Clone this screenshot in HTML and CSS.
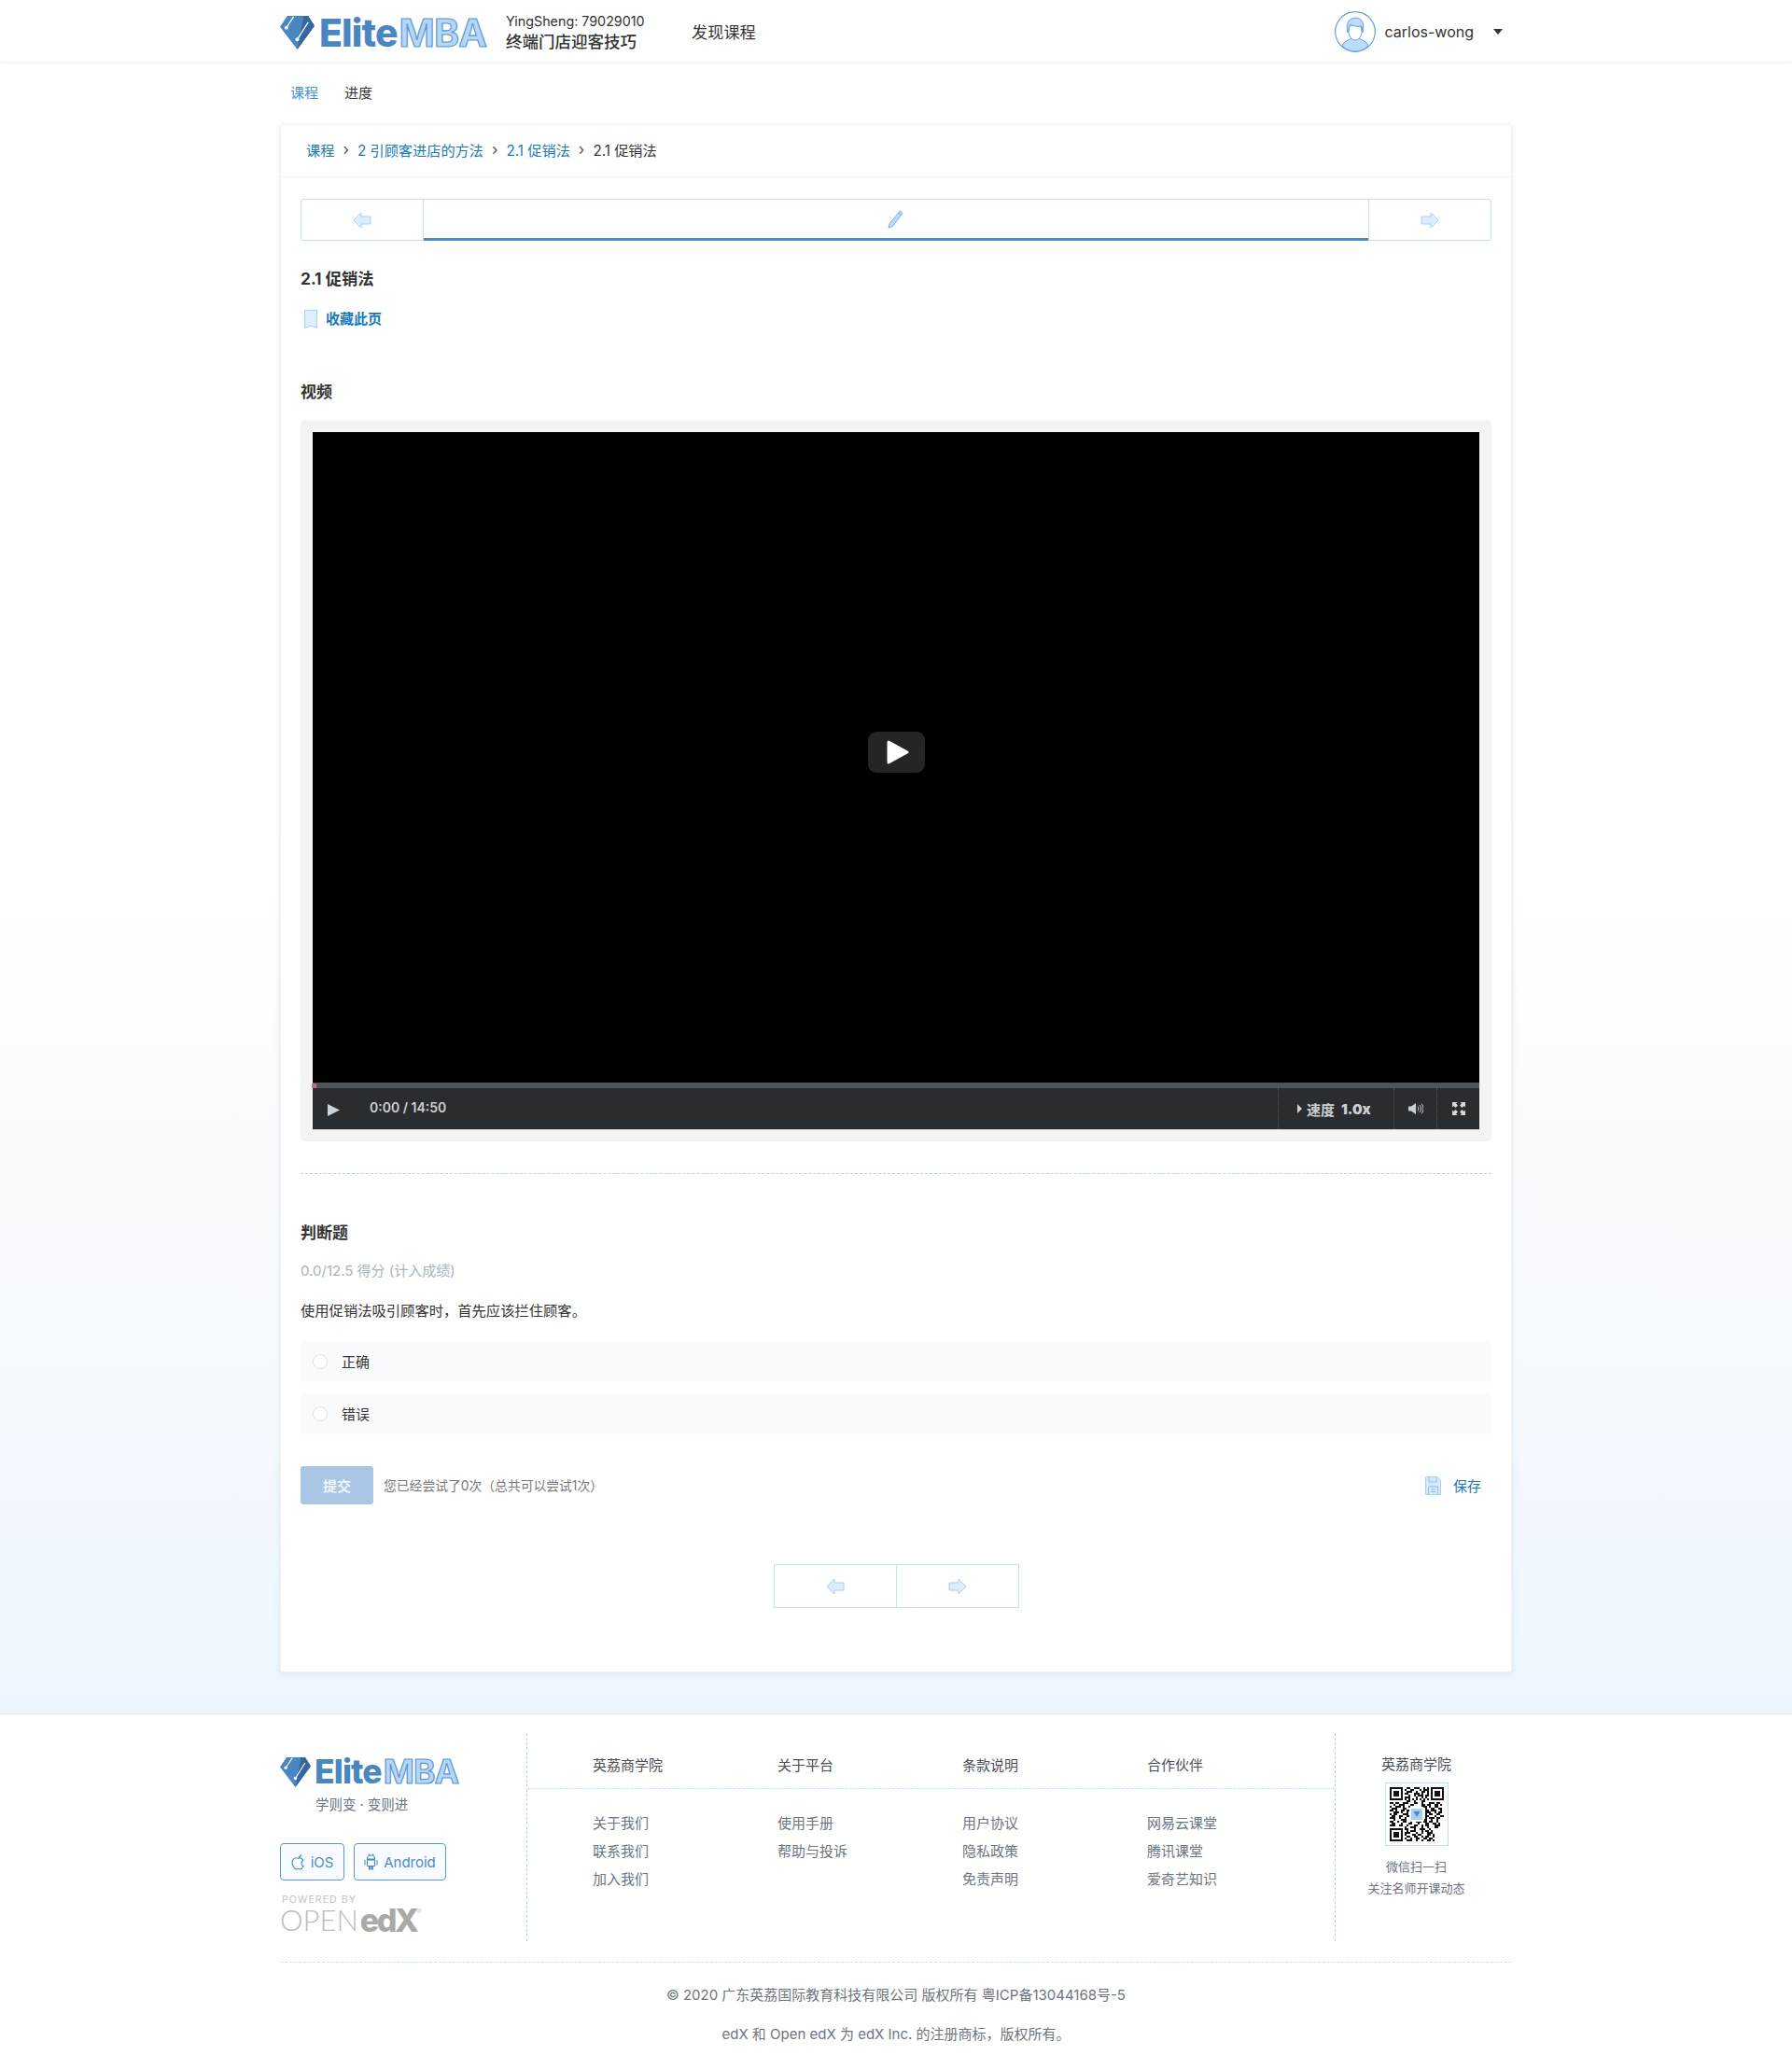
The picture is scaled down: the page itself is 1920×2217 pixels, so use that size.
FILE: index.html
```html
<!DOCTYPE html>
<html lang="zh-CN">
<head>
    <meta charset="UTF-8">
    <title>2.1 促销法</title>
    <link rel="stylesheet" href="styles.css">
</head>
<body>
    <header class="site-header">
        <div class="wrap header-inner">
            <a class="logo">
                <svg class="logo-mark" viewBox="0 0 38 37"><path d="M8 0H31L38 11L19 37L0 12Z" fill="#4a86c2"/><path d="M26 0H31L38 11L19 37Z" fill="#35689c"/><path d="M7 13L15 1M19 26L31 7" stroke="#fff" stroke-width="1.3" fill="none"/><circle cx="7" cy="13" r="2" fill="#fff"/><circle cx="19" cy="26" r="2" fill="#fff"/></svg>
                <span class="logo-elite">Elite</span><span class="logo-mba">MBA</span>
            </a>
            <div class="course-info">
                <div class="course-org">YingSheng: 79029010</div>
                <div class="course-name">终端门店迎客技巧</div>
            </div>
            <a class="discover">发现课程</a>
            <div class="user-menu">
                <svg class="avatar" viewBox="0 0 44 44"><circle cx="22" cy="22" r="21.3" fill="#fff" stroke="#62a1dd" stroke-width="1.2"/><path d="M8 37C10 32 15 31 18 29H26C29 31 34 32 36 37C32 41 27 43 22 43C17 43 12 41 8 37Z" fill="#bcdcfb" stroke="#62a1dd"/><path d="M15 21C15 28 19 31 22 31C25 31 29 28 29 21L28 15H16Z" fill="#fff" stroke="#62a1dd"/><path d="M14 23C12 14 14 8 22 7C30 7 32 14 30 23L29 16C25 17 20 16 17 14C16 16 15 19 14 23Z" fill="#bcdcfb" stroke="#62a1dd"/></svg>
                <span class="username">carlos-wong</span>
                <span class="caret"></span>
            </div>
        </div>
    </header>

    <main class="page">
        <nav class="wrap tabs">
            <a class="tab tab-active">课程</a>
            <a class="tab">进度</a>
        </nav>

        <section class="wrap card">
            <div class="breadcrumb">
                <a>课程</a><i>›</i><a>2 引顾客进店的方法</a><i>›</i><a>2.1 促销法</a><i>›</i><span>2.1 促销法</span>
            </div>
            <div class="card-body">
                <div class="seq-nav">
                    <button class="seq-btn seq-prev"><svg class="arrow" viewBox="0 0 20 20"><path d="M9 2L1 10L9 18V14H19V6H9Z"/></svg></button>
                    <div class="seq-current"><svg class="pencil" viewBox="0 0 20 24"><path d="M15 2L18 5L6 21L1 23L2 18Z" fill="#bcdcfb" stroke="#6ba7e0"/><path d="M13 4.500L16 7.500" stroke="#6ba7e0"/></svg></div>
                    <button class="seq-btn seq-next"><svg class="arrow" viewBox="0 0 20 20"><path d="M11 2L19 10L11 18V14H1V6H11Z"/></svg></button>
                </div>

                <h2 class="unit-title">2.1 促销法</h2>
                <a class="bookmark"><svg class="bookmark-icon" viewBox="0 0 14 20"><path d="M.5.5H13.500V19.500L7 17L.5 19.500Z" fill="#deeefd" stroke="#a9cff3"/></svg>收藏此页</a>

                <h3 class="block-title video-title">视频</h3>
                <div class="video-box">
                    <div class="video-screen">
                        <div class="big-play"><svg viewBox="0 0 24 28"><path d="M2 3L22 14L2 25Z" fill="#fff" stroke="#fff" stroke-width="3" stroke-linejoin="round"/></svg></div>
                    </div>
                    <div class="video-progress"><span class="video-handle"></span></div>
                    <div class="video-controls">
                        <svg class="ctl-play" viewBox="0 0 13 13"><path d="M0 0L13 6.500L0 13Z"/></svg>
                        <span class="video-time">0:00 / 14:50</span>
                        <div class="ctl-speed"><span class="speed-tri"></span>速度<b>1.0x</b></div>
                        <div class="ctl-cell ctl-volume"><svg viewBox="0 0 16 14"><path d="M0 4.500H3L8 1V13L3 9.500H0Z" fill="#c9ced2"/><path d="M10 4.500C11 6 11 8 10 9.500M12 3C14 5 14 9 12 11M14 1.500C16.500 4.500 16.500 9.500 14 12.500" stroke="#c9ced2" fill="none"/></svg></div>
                        <div class="ctl-cell ctl-full"><svg viewBox="0 0 14 14"><path d="M0 0H5.500L4 1.500L6 3.500L3.500 6L1.500 4L0 5.500ZM14 0V5.500L12.500 4L10.500 6L8 3.500L10 1.500L8.500 0ZM14 14H8.500L10 12.500L8 10.500L10.500 8L12.500 10L14 8.500ZM0 14V8.500L1.500 10L3.500 8L6 10.500L4 12.500L5.500 14Z" fill="#d5d9dc"/></svg></div>
                    </div>
                </div>

                <hr class="dash-line">

                <h3 class="block-title quiz-title">判断题</h3>
                <p class="quiz-score">0.0/12.5 得分 (计入成绩)</p>
                <p class="quiz-question">使用促销法吸引顾客时，首先应该拦住顾客。</p>
                <label class="option"><span class="radio"></span>正确</label>
                <label class="option"><span class="radio"></span>错误</label>

                <div class="quiz-actions">
                    <button class="submit-btn">提交</button>
                    <span class="attempts">您已经尝试了0次（总共可以尝试1次）</span>
                    <a class="save-link"><svg class="save-icon" viewBox="0 0 17 20"><path d="M.5.5H13L16.500 4V19.500H.5Z" fill="#d7eafc" stroke="#a9cff3"/><path d="M4 1V6H12V1M3.500 11H13.500V19M3.500 19V11M6 14H11M6 16.500H11" fill="none" stroke="#8fbfec"/></svg>保存</a>
                </div>

                <div class="bottom-nav">
                    <button class="seq-btn"><svg class="arrow" viewBox="0 0 20 20"><path d="M9 2L1 10L9 18V14H19V6H9Z"/></svg></button>
                    <button class="seq-btn"><svg class="arrow" viewBox="0 0 20 20"><path d="M11 2L19 10L11 18V14H1V6H11Z"/></svg></button>
                </div>
            </div>
        </section>
    </main>

    <footer class="site-footer">
        <div class="wrap">
            <div class="footer-top">
                <div class="footer-brand">
                    <a class="logo logo-small">
                        <svg class="logo-mark" viewBox="0 0 38 37"><path d="M8 0H31L38 11L19 37L0 12Z" fill="#4a86c2"/><path d="M26 0H31L38 11L19 37Z" fill="#35689c"/><path d="M7 13L15 1M19 26L31 7" stroke="#fff" stroke-width="1.3" fill="none"/><circle cx="7" cy="13" r="2" fill="#fff"/><circle cx="19" cy="26" r="2" fill="#fff"/></svg>
                        <span class="logo-elite">Elite</span><span class="logo-mba">MBA</span>
                    </a>
                    <div class="tagline">学则变 · 变则进</div>
                    <div class="app-links">
                        <a class="app-btn app-ios"><svg viewBox="0 0 14 17"><path d="M10 1C9.800 2.500 8.800 3.500 7.300 3.700M7 5C5.500 4.300 3.500 4.300 2.200 5.700C.5 7.500.7 10.500 2 13C3 15 4.500 16.500 6 15.800C6.800 15.500 7.500 15.500 8.300 15.800C9.800 16.500 11.300 15 12.300 13C11 12.300 10.200 11.300 10.200 9.800C10.200 8.500 11 7.400 12 6.800C11 5.200 8.800 4.200 7 5Z" fill="none" stroke="#4a8ccb" stroke-width="1.100"/></svg>iOS</a>
                        <a class="app-btn app-android"><svg viewBox="0 0 15 18"><path d="M3.500 6C3.500 3.500 5 2 7.500 2C10 2 11.500 3.500 11.500 6ZM3.500 7H11.500V13.500H3.500ZM5.500 13.500V17H6.800V13.500M8.200 13.500V17H9.500V13.500M1 7V12.500M14 7V12.500M5 .5L6 2.500M10 .5L9 2.500" fill="none" stroke="#4a8ccb" stroke-width="1.100"/></svg>Android</a>
                    </div>
                    <div class="powered">
                        <div class="powered-by">POWERED BY</div>
                        <div class="openedx"><span class="openedx-open">OPEN</span><span class="openedx-edx">edX</span><sup>®</sup></div>
                    </div>
                </div>

                <div class="footer-links">
                    <div class="links-head">
                        <span>英荔商学院</span><span>关于平台</span><span>条款说明</span><span>合作伙伴</span>
                    </div>
                    <div class="links-grid">
                        <ul><li>关于我们</li><li>联系我们</li><li>加入我们</li></ul>
                        <ul><li>使用手册</li><li>帮助与投诉</li></ul>
                        <ul><li>用户协议</li><li>隐私政策</li><li>免责声明</li></ul>
                        <ul><li>网易云课堂</li><li>腾讯课堂</li><li>爱奇艺知识</li></ul>
                    </div>
                </div>

                <div class="footer-qr">
                    <div class="qr-title">英荔商学院</div>
                    <div class="qr-box">
                        <svg viewBox="0 0 29 29">
                            <path fill="none" stroke="#111" d="M.5.5h6v6h-6zM22.500.5h6v6h-6zM.5 22.500h6v6h-6z"/>
                            <path fill="#111" d="M2 2h3v3H2zM24 2h3v3h-3zM2 24h3v3H2z"/>
                            <path fill="none" stroke="#111" d="M9 .5h2m2 0h3m2 0h1m1 0h1M8 1.500h1m2 0h2m3 0h1m1 0h3M9 2.500h3m2 0h1m2 0h2m1 0h1M8 3.500h2m3 0h3m1 0h1m2 0h1M10 4.500h1m2 0h1m1 0h3m1 0h2M8 5.500h3m3 0h1m2 0h1m1 0h1M8 6.500h1m1 0h1m1 0h1m1 0h1m1 0h1m1 0h1m1 0h1M9 7.500h2m2 0h1m3 0h2M0 8.500h2m1 0h2m2 0h3m3 0h2m2 0h1m3 0h3m1 0h2M2 9.500h1m2 0h3m3 0h2m4 0h2m1 0h2m2 0h2m1 0h1M0 10.500h1m2 0h3m1 0h1m2 0h1m6 0h3m1 0h1m2 0h2M1 11.500h3m3 0h2m2 0h1m7 0h1m2 0h2m2 0h2M0 12.500h2m1 0h1m2 0h2m1 0h2m8 0h2m1 0h3m2 0h1M2 13.500h3m1 0h1m2 0h1m9 0h3m2 0h1m1 0h2M0 14.500h1m1 0h2m3 0h3m9 0h1m1 0h2m2 0h2M1 15.500h2m2 0h2m2 0h2m8 0h2m3 0h1m2 0h2M0 16.500h3m2 0h1m2 0h1m2 0h1m7 0h1m1 0h3m1 0h2M2 17.500h1m3 0h3m2 0h2m5 0h2m2 0h1m2 0h1M0 18.500h2m2 0h1m2 0h2m2 0h1m2 0h3m1 0h2m1 0h2m2 0h1M1 19.500h2m3 0h1m3 0h2m3 0h1m3 0h2m2 0h2m1 0h1M0 20.500h3m2 0h2m2 0h1m3 0h2m2 0h1m1 0h2m3 0h3M8 21.500h1m2 0h3m3 0h1m2 0h1m3 0h2M8 22.500h2m3 0h1m2 0h3m2 0h1M9 23.500h1m1 0h3m3 0h1m1 0h2m1 0h1M8 24.500h3m3 0h1m2 0h1m2 0h3M8 25.500h1m3 0h2m1 0h2m3 0h2m1 0h1M9 26.500h2m2 0h2m2 0h1m1 0h2m2 0h1M8 27.500h1m2 0h1m2 0h2m2 0h2m1 0h2M9 28.500h3m2 0h1m2 0h1m2 0h2m1 0h1"/>
                            <rect x="10.500" y="10.500" width="8" height="8" rx="1" fill="#fff"/>
                            <rect x="11.500" y="11.500" width="6" height="6" fill="#a6cdf3"/>
                            <path d="M12.800 13H16.200L14.500 16Z" fill="#4a86c2"/>
                        </svg>
                    </div>
                    <div class="qr-line">微信扫一扫</div>
                    <div class="qr-line">关注名师开课动态</div>
                </div>
            </div>

            <div class="footer-copy">
                <p>© 2020 广东英荔国际教育科技有限公司 版权所有 粤ICP备13044168号-5</p>
                <p>edX 和 Open edX 为 edX Inc. 的注册商标，版权所有。</p>
            </div>
        </div>
    </footer>
</body>
</html>
```

FILE: styles.css
```css
* {
    box-sizing: border-box;
}
body {
    margin: 0;
    background: #fff;
    color: #333;
    font-family: Inter, "Noto Sans CJK SC", sans-serif;
    font-size: 15px;
}
h2, h3, p, ul {
    margin: 0;
    padding: 0;
}
ul {
    list-style: none;
}
button {
    font-family: inherit;
    padding: 0;
}
.wrap {
    width: 1320px;
    margin: 0 auto;
}

/* header */
.site-header {
    position: relative;
    height: 66px;
    background: #fff;
    box-shadow: 0 1px 4px rgba(0,0,0,0.08);
}
.header-inner {
    display: flex;
    align-items: center;
    height: 66px;
}
.logo {
    display: flex;
    align-items: center;
    width: 220px;
    margin-top: 4px;
    font-size: 41px;
    line-height: 40px;
    font-weight: 800;
}
.logo-mark {
    width: 37px;
    height: 36px;
    margin-right: 5px;
    flex: none;
}
.logo-elite {
    color: #4a86c2;
    letter-spacing: -0.9px;
}
.logo-mba {
    margin-left: 2px;
    color: #b5d6f5;
    font-weight: 700;
    -webkit-text-stroke: 1.2px #5b98d3;
    letter-spacing: -0.9px;
}
.course-info {
    width: 150px;
    margin: 2px 0 0 22px;
}
.course-org {
    font-size: 14.3px;
    line-height: 22px;
    white-space: nowrap;
}
.course-name {
    font-size: 17.5px;
    line-height: 22px;
    font-weight: 500;
    white-space: nowrap;
}
.discover {
    margin-left: 49px;
    font-size: 17.2px;
}
.user-menu {
    display: flex;
    align-items: center;
    margin: 2px 0 0 auto;
    padding-right: 10px;
}
.avatar {
    width: 44px;
    height: 44px;
}
.username {
    margin-left: 10px;
    font-size: 16px;
}
.caret {
    margin-left: 21px;
    border-top: 6px solid #333;
    border-left: 5.5px solid transparent;
    border-right: 5.5px solid transparent;
}

/* course area */
.page {
    padding-bottom: 44px;
    background: linear-gradient(#fff 45%, #eef6fd);
}
.tabs {
    display: flex;
    align-items: center;
    gap: 28px;
    height: 67px;
    padding: 0 0 3px 11px;
}
.tab-active {
    color: #4a90d0;
}
.card {
    background: #fff;
    border: 1px solid #eef4fa;
    border-radius: 3px;
    box-shadow: 0 1px 6px rgba(120,160,200,0.18);
}
.breadcrumb {
    display: flex;
    align-items: center;
    height: 56px;
    padding: 0 0 3px 27px;
    border-bottom: 1px solid #f3f5f8;
    color: #1a78b8;
    font-size: 15.2px;
}
.breadcrumb i {
    margin: 0 9px;
    color: #555;
    font-style: normal;
    font-size: 17px;
}
.breadcrumb span {
    color: #333;
}
.card-body {
    padding: 23px 21px 68px;
}
.seq-nav {
    display: flex;
    height: 45px;
}
.seq-btn {
    display: flex;
    align-items: center;
    justify-content: center;
    width: 132px;
    background: #fff;
    border: 1px solid #c4dff7;
}
.seq-prev {
    border-radius: 3px 0 0 3px;
}
.seq-next {
    border-radius: 0 3px 3px 0;
}
.arrow {
    width: 20px;
    height: 20px;
    fill: #dcedfd;
    stroke: #a9cff3;
}
.seq-current {
    display: flex;
    align-items: center;
    justify-content: center;
    flex: 1;
    padding-bottom: 1px;
    border-top: 1px solid #c4dff7;
    border-bottom: 3px solid #4a8ccb;
}
.pencil {
    width: 20px;
    height: 21px;
}
.unit-title {
    margin-top: 26px;
    font-size: 17.3px;
    line-height: 30px;
    font-weight: 700;
}
.bookmark {
    display: flex;
    align-items: center;
    height: 20px;
    margin-top: 18px;
    padding-left: 4px;
    color: #1a78b8;
    font-weight: 700;
    line-height: 18px;
}
.bookmark-icon {
    width: 14px;
    height: 20px;
    margin-right: 9px;
}
.block-title {
    font-size: 17px;
    line-height: 30px;
    font-weight: 700;
}
.video-title {
    margin-top: 53px;
}
.video-box {
    margin-top: 15px;
    padding: 13px;
    background: #f4f4f4;
    border-radius: 5px;
}
.video-screen {
    display: flex;
    align-items: center;
    justify-content: center;
    height: 697px;
    padding-bottom: 12px;
    background: #000;
}
.big-play {
    display: flex;
    align-items: center;
    justify-content: center;
    width: 61px;
    height: 44px;
    padding-left: 4px;
    background: #252525;
    border-radius: 9px;
}
.big-play svg {
    width: 24px;
    height: 28px;
}
.video-progress {
    position: relative;
    height: 6px;
    background: #4e5558;
}
.video-handle {
    position: absolute;
    left: -1px;
    top: 1px;
    width: 5px;
    height: 5px;
    background: #d0609b;
}
.video-controls {
    display: flex;
    align-items: center;
    height: 45px;
    margin-bottom: -1px;
    background: #2a2d30;
    border-bottom: 1px solid #d5d5d5;
    color: #ccd0d3;
}
.ctl-play {
    width: 13px;
    height: 13px;
    margin: 3px 0 0 16px;
    fill: #c9d3dc;
}
.video-time {
    margin: -3px 0 0 32px;
    font-size: 14px;
    font-weight: 600;
}
.ctl-speed {
    display: flex;
    align-items: center;
    align-self: stretch;
    width: 124px;
    margin-left: auto;
    padding-left: 20px;
    border-left: 1px dotted #555;
    font-size: 15px;
    font-weight: 700;
}
.ctl-speed b {
    margin-left: 7px;
}
.speed-tri {
    margin-right: 5px;
    border-left: 5px solid #ccd0d3;
    border-top: 5px solid transparent;
    border-bottom: 5px solid transparent;
}
.ctl-cell {
    display: flex;
    align-items: center;
    justify-content: center;
    align-self: stretch;
    border-left: 1px dotted #555;
}
.ctl-volume {
    width: 46px;
}
.ctl-volume svg {
    width: 16px;
    height: 14px;
}
.ctl-full {
    width: 46px;
}
.ctl-full svg {
    width: 14px;
    height: 14px;
}
.dash-line {
    height: 0;
    margin: 34px 0 0;
    border: 0;
    border-top: 1px dashed #a9d6fb;
}
.quiz-title {
    margin-top: 48px;
}
.quiz-score {
    margin-top: 14px;
    color: #a9b3c2;
    line-height: 24px;
}
.quiz-question {
    margin-top: 19px;
    font-size: 15.3px;
    line-height: 24px;
}
.option {
    display: flex;
    align-items: center;
    height: 45px;
    margin-top: 11px;
    padding: 0 0 2px 13px;
    background: #fafbfd;
}
.quiz-question + .option {
    margin-top: 20px;
}
.radio {
    width: 16px;
    height: 16px;
    margin-right: 15px;
    background: #fff;
    border: 1px solid #dfe3e8;
    border-radius: 50%;
}
.quiz-actions {
    display: flex;
    align-items: center;
    height: 41px;
    margin-top: 33px;
}
.submit-btn {
    width: 78px;
    height: 41px;
    background: #a9c6e6;
    border: 0;
    border-radius: 3px;
    color: #eef4fb;
    font-size: 15px;
    font-weight: 700;
}
.attempts {
    margin: -2px 0 0 11px;
    color: #777;
    font-size: 13.8px;
}
.save-link {
    display: flex;
    align-items: center;
    margin-left: auto;
    padding-right: 11px;
    color: #1a78b8;
}
.save-icon {
    width: 17px;
    height: 20px;
    margin-right: 13px;
}
.bottom-nav {
    display: flex;
    justify-content: center;
    height: 47px;
    margin-top: 64px;
}
.bottom-nav .seq-btn + .seq-btn {
    margin-left: -1px;
}

/* footer */
.site-footer {
    background: #fff;
    border-top: 1px solid #d7e8f7;
    padding-top: 20px;
}
.footer-top {
    display: flex;
    height: 223px;
}
.footer-brand {
    width: 264px;
    padding-top: 24px;
}
.logo-small {
    width: 200px;
    height: 36px;
    margin-top: 0;
    font-size: 35.5px;
}
.logo-small .logo-mark {
    width: 33px;
    height: 32px;
    margin-right: 4px;
}
.tagline {
    margin-top: 5px;
    padding-left: 38px;
    color: #6b7280;
    font-size: 14.500px;
    line-height: 24px;
}
.app-links {
    display: flex;
    gap: 10px;
    margin-top: 29px;
}
.app-btn {
    display: flex;
    align-items: center;
    justify-content: center;
    height: 40px;
    background: #f8fbff;
    border: 1px solid #5b98d3;
    border-radius: 4px;
    color: #4a8ccb;
    font-size: 15px;
}
.app-btn svg {
    width: 15px;
    height: 18px;
    margin-right: 6px;
}
.app-ios {
    width: 69px;
}
.app-android {
    width: 99px;
}
.powered {
    margin-top: 15px;
    color: #c4c4c4;
}
.powered-by {
    padding-left: 2px;
    font-size: 10.500px;
    line-height: 12px;
    letter-spacing: 1.100px;
}
.openedx {
    display: flex;
    height: 30px;
    align-items: center;
    white-space: nowrap;
}
.openedx sup {
    align-self: flex-start;
    font-size: 8px;
    line-height: 12px;
}
.openedx-open {
    font-family: Lato, sans-serif;
    font-weight: 300;
    font-size: 31px;
    color: #bcbcbc;
}
.openedx-edx {
    margin-left: 2px;
    font-weight: 800;
    font-size: 34px;
    letter-spacing: -2.500px;
    color: #a9a9a6;
}
.footer-links {
    width: 867px;
    border-left: 1px dashed #a9d6fb;
    border-right: 1px dashed #a9d6fb;
}
.links-head {
    display: grid;
    grid-template-columns: repeat(4, 198px);
    align-items: center;
    height: 60px;
    padding: 8px 0 0 70px;
    border-bottom: 1px dashed #bfe0fa;
    color: #4a4f57;
}
.links-grid {
    display: grid;
    grid-template-columns: repeat(4, 198px);
    margin-top: 22px;
    padding-left: 70px;
    color: #6c7480;
}
.links-grid li {
    line-height: 30px;
}
.footer-qr {
    flex: 1;
    padding: 22px 16px 0 0;
    text-align: center;
}
.qr-title {
    color: #4a4f57;
    line-height: 24px;
}
.qr-box {
    width: 68px;
    height: 68px;
    margin: 7px auto 11px;
    padding: 4px;
    background: #fff;
    border: 1px solid #bfe0fa;
}
.qr-box svg {
    display: block;
    width: 58px;
    height: 58px;
}
.qr-line {
    color: #6c7480;
    font-size: 13px;
    line-height: 23px;
}
.footer-copy {
    margin-top: 22px;
    padding: 23px 0 25px;
    border-top: 1px dashed #bfe0fa;
    color: #6c7480;
    font-size: 15px;
    line-height: 24px;
    text-align: center;
}
.footer-copy p + p {
    margin-top: 18px;
}
```
